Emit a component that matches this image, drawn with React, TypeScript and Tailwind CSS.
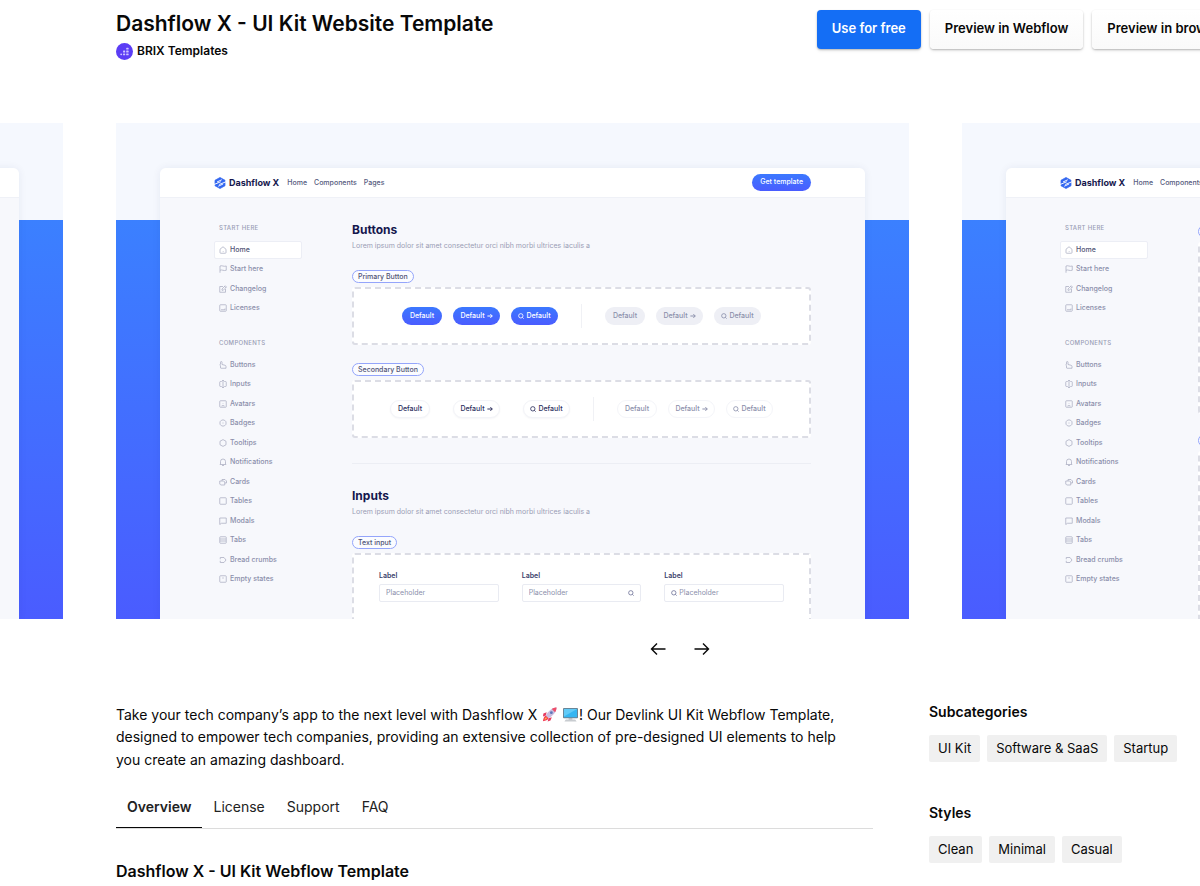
import type { ReactNode } from 'react';

const startLinks = [
  { label: 'Home', icon: 'M2 6.5 8 1.5l6 5V13a1.5 1.5 0 0 1-1.5 1.5h-9A1.5 1.5 0 0 1 2 13ZM7.5 11h1.5' },
  { label: 'Start here', icon: 'M2 15.5V2c4-2 7 2 12.500 0v8.500C9.500 12.500 6 8.500 2 10.500' },
  { label: 'Changelog', icon: 'M8 3H1.500v11.500H13V8M6 10.500V8l6.500-6.500 2.500 2.500L8.500 10.500ZM11 3l2.500 2.500' },
  { label: 'Licenses', icon: 'M3 1.500h10A1.500 1.500 0 0 1 14.500 3v10a1.500 1.500 0 0 1-1.500 1.500H3A1.500 1.500 0 0 1 1.500 13V3A1.500 1.500 0 0 1 3 1.500ZM4 11.500h8V9' },
];

const componentLinks = [
  { label: 'Buttons', icon: 'M3 14.500V9.500L1.500 8 3 6V2.500a1.500 1.500 0 0 1 3 0V7l6 1.500q2 .5 2 2.500v3.500H4' },
  { label: 'Inputs', icon: 'M8 1v14M6 1h4M6 15h4M5.500 3H3A1.500 1.500 0 0 0 1.500 4.500v7A1.500 1.500 0 0 0 3 13h2.500M10.500 3H13a1.500 1.500 0 0 1 1.500 1.500v7A1.500 1.500 0 0 1 13 13h-2.500' },
  { label: 'Avatars', icon: 'M3 1.500h10A1.500 1.500 0 0 1 14.500 3v10a1.500 1.500 0 0 1-1.500 1.500H3A1.500 1.500 0 0 1 1.500 13V3A1.500 1.500 0 0 1 3 1.500ZM5 12q3-2 6 0M8 6v1' },
  { label: 'Badges', icon: 'M5.500 2h5L14 5.500v5L10.500 14h-5L2 10.500v-5ZM7 8h2' },
  { label: 'Tooltips', icon: 'M8 1.200 14 4.500v7L8 14.800 2 11.500v-7Z' },
  { label: 'Notifications', icon: 'M3 12V7a5 5 0 0 1 10 0v5l1 1H2ZM6 15h4' },
  { label: 'Cards', icon: 'M1.500 6h8l2 2v6h-8l-2-2ZM6 6V3h6l3 3v4h-3.500' },
  { label: 'Tables', icon: 'M3 1.500h10A1.500 1.500 0 0 1 14.500 3v10a1.500 1.500 0 0 1-1.500 1.500H3A1.500 1.500 0 0 1 1.500 13V3A1.500 1.500 0 0 1 3 1.500Z' },
  { label: 'Modals', icon: 'M1.500 2h13v10.500H5L1.500 15Z' },
  { label: 'Tabs', icon: 'M3 1.500h10A1.500 1.500 0 0 1 14.500 3v10a1.500 1.500 0 0 1-1.500 1.500H3A1.500 1.500 0 0 1 1.500 13V3A1.500 1.500 0 0 1 3 1.500ZM2 6h12M2 10h12' },
  { label: 'Bread crumbs', icon: 'M2.500 3H10l4 5-4 5H2.500V9.500M2.500 3v3.500' },
  { label: 'Empty states', icon: 'M3 1.500h10A1.500 1.500 0 0 1 14.500 3v10a1.500 1.500 0 0 1-1.500 1.500H3A1.500 1.500 0 0 1 1.500 13V3A1.500 1.500 0 0 1 3 1.500ZM6.500 6h3' },
];

function DashflowLogo() {
  return (
    <svg viewBox="0 0 24 24" className="size-3" aria-hidden="true">
      <path d="M12 1 22 6.500v11L12 23 2 17.500v-11Z" fill="#3468f0" stroke="#3468f0" strokeWidth="1.500" strokeLinejoin="round" />
      <path d="M6 10 15.500 5.500M0 15 13.500 9.500M10.500 15 24 9.500M8.500 18.500 18 14" fill="none" stroke="#fff" strokeWidth="1.900" />
    </svg>
  );
}

function SearchIcon() {
  return (
    <svg viewBox="0 0 16 16" className="size-[6px] shrink-0" fill="none" stroke="currentColor" strokeWidth="2.200" aria-hidden="true">
      <circle cx="7.500" cy="7.500" r="5.800" />
      <path d="m11.500 11.500 3.500 3.500" />
    </svg>
  );
}

function SmallArrow() {
  return (
    <svg viewBox="0 0 16 16" className="size-[6px] shrink-0" fill="none" stroke="currentColor" strokeWidth="2.600" aria-hidden="true">
      <path d="M1 8h13M9 3l5 5-5 5" />
    </svg>
  );
}

type Link = { label: string; icon: string };

function SideNav({ title, links, gap }: { title: string; links: Link[]; gap?: boolean }) {
  return (
    <div className={gap ? 'mt-5' : ''}>
      <h3 className="ml-[5px] text-[6px] leading-[10px] font-medium tracking-wider text-[#9a9db5]">{title}</h3>
      <ul className={gap ? 'mt-[7px] grid h-[234px] auto-rows-fr' : 'mt-[7px] grid h-[78px] auto-rows-fr'}>
        {links.map((link) => {
          const active = link.label === 'Home';
          return (
            <li key={link.label} className="flex items-center">
              <a
                href="#"
                className={
                  active
                    ? 'flex h-[18px] w-full items-center gap-[3px] rounded-[2px] border border-[#eceef5] bg-white px-1 text-[7px] font-medium text-[#4f5375]'
                    : 'flex h-[18px] w-full items-center gap-[3px] px-[5px] text-[7px] font-medium text-[#8b8fab]'
                }
              >
                <svg viewBox="0 0 16 16" className="size-2 shrink-0" fill="none" stroke="#a9acc0" strokeWidth="1.500" aria-hidden="true">
                  <path d={link.icon} />
                </svg>
                {link.label}
              </a>
            </li>
          );
        })}
      </ul>
    </div>
  );
}

function KitSlide({ children }: { children?: ReactNode }) {
  return (
    <article className="h-[496px] w-[793px] shrink-0 overflow-hidden bg-[linear-gradient(to_bottom,#f5f8fe_97px,#3b80ff_97px,#4a5cff)] px-11 pt-[45px]">
      <div className="h-full overflow-hidden rounded-t-md bg-[#f7f8fc] shadow-[0_0_8px_rgba(20,40,100,0.07)]">
        <div className="flex h-[30px] items-center border-b border-[#eff1f7] bg-white px-[54px]">
          {children && (
            <>
              <a href="#" className="flex items-center gap-[3px] text-[9px] font-bold text-[#15174d]">
                <DashflowLogo />
                Dashflow X
              </a>
              <nav className="ml-2 flex gap-[7px] pt-px text-[7px] font-medium text-[#555a7d]">
                <a href="#">Home</a>
                <a href="#">Components</a>
                <a href="#">Pages</a>
              </nav>
              <button className="ml-auto h-[17px] rounded-full bg-linear-to-b from-[#3b78ff] to-[#4a5cff] px-2 text-[7px] font-medium text-white">
                Get template
              </button>
            </>
          )}
        </div>
        {children && (
          <div className="flex gap-[50px] px-[54px] pt-6">
            <div className="w-[88px] shrink-0 pt-px">
              <SideNav title="START HERE" links={startLinks} />
              <SideNav title="COMPONENTS" links={componentLinks} gap />
            </div>
            <div className="min-w-0 flex-1">{children}</div>
          </div>
        )}
      </div>
    </article>
  );
}

function Pill({ children }: { children?: ReactNode }) {
  return (
    <span className="flex h-[13px] w-fit min-w-11 items-center rounded-full border border-[#94a5fb] bg-[#fbfcff] px-[5px] text-[7px] leading-[13px] font-medium text-[#4f5375]">
      {children}
    </span>
  );
}

function SectionTitle({ title }: { title: string }) {
  return (
    <>
      <h2 className="text-[12px] leading-4 font-bold text-[#15174d]">{title}</h2>
      <p className="text-[7px] leading-4 text-[#9a9db5]">
        Lorem ipsum dolor sit amet consectetur orci nibh morbi ultrices iaculis a
      </p>
    </>
  );
}

const dashedBox = 'mt-1 rounded-[3px] border-2 border-dashed border-[#dcdde5] bg-white';

const tones = {
  primary: 'bg-linear-to-b from-[#3b78ff] to-[#4a5cff] text-white',
  disabled: 'bg-[#eeeff5] text-[#8b8fab]',
  outline: 'border border-[#f3f4f8] bg-white text-[#2b2e5c] shadow-[0_1px_2px_rgba(20,30,80,0.04)]',
  faded: 'border border-[#f4f5f9] bg-white text-[#8b8fab]',
};

function KitButton({ tone, lead, trail }: { tone: keyof typeof tones; lead?: boolean; trail?: boolean }) {
  return (
    <button
      className={`flex h-[18px] items-center justify-center gap-[2px] rounded-full text-[7px] font-medium ${lead || trail ? 'w-[47px]' : 'w-10'} ${tones[tone]}`}
    >
      {lead && <SearchIcon />}
      Default
      {trail && <SmallArrow />}
    </button>
  );
}

function ButtonTrio({ tone, wide }: { tone: keyof typeof tones; wide?: boolean }) {
  return (
    <div className={wide ? 'flex gap-[23px]' : 'flex gap-[11px]'}>
      <KitButton tone={tone} />
      <KitButton tone={tone} trail />
      <KitButton tone={tone} lead />
    </div>
  );
}

function Field({ id, lead, trail }: { id: string; lead?: boolean; trail?: boolean }) {
  return (
    <div className="flex-1">
      <label htmlFor={id} className="block text-[7px] leading-[10px] font-semibold text-[#3b3f6b]">
        Label
      </label>
      <div className="mt-[3px] flex h-[18px] items-center gap-[2px] rounded-[2px] border border-[#e9ebf2] bg-white px-[6px] text-[#71759a]">
        {lead && <SearchIcon />}
        <input
          id={id}
          placeholder="Placeholder"
          className="w-full min-w-0 bg-transparent text-[7px] outline-none placeholder:text-[#8b8fab]"
        />
        {trail && <SearchIcon />}
      </div>
    </div>
  );
}

function Rocket() {
  return (
    <svg viewBox="0 0 16 16" className="mx-px inline-block size-[15px] align-[-2px]" role="img" aria-label="rocket">
      <path d="M5 5.500 1.500 7 1 10l3-1ZM10.500 11 9 14.500 6 15.500l1-3.500Z" fill="#e5395f" />
      <path d="M15.500.5C11 .5 7 4 4 9l3 3c5-3 8.500-7 8.500-11.500Z" fill="#c9bde0" />
      <path d="M15.500.5c-2 0-3.500.6-5 1.600l3.400 3.400c1-1.500 1.600-3 1.600-5Z" fill="#ef4d68" />
      <circle cx="10" cy="6" r="1.500" fill="#5d77b8" />
      <path d="m4 9 3 3c-1 2-3 2.500-6 3.200C1.500 12 2 10 4 9Z" fill="#f2394f" />
      <path d="m4.300 10.800 1 1c-.5 1-1.500 1.600-2.800 1.800.2-1.200.8-2.300 1.800-2.800Z" fill="#ffb547" />
    </svg>
  );
}

function Computer() {
  return (
    <svg viewBox="0 0 16 16" className="mx-px inline-block size-[15px] align-[-2px]" role="img" aria-label="computer">
      <rect x="0" y="1" width="16" height="11" rx="1" fill="#6e7f8c" />
      <rect x="1" y="2" width="14" height="9" fill="#35b6f1" />
      <path d="M1 2h14L1 10Z" fill="#62cbf7" />
      <path d="M6 12h4v1.500H6Z" fill="#aab0b6" />
      <path d="M3 13.300h10l1.500 2.200h-13Z" fill="#c8ccd0" />
    </svg>
  );
}

function TagGroup({ title, tags }: { title: string; tags: string[] }) {
  return (
    <section>
      <h3 className="text-[14px] leading-6 font-semibold">{title}</h3>
      <ul className="mt-[11px] flex gap-[7px]">
        {tags.map((tag) => (
          <li key={tag}>
            <a href="#" className="flex h-[27px] items-center rounded-[2px] bg-[#f0f0f0] px-[9px] text-[13px]">
              {tag}
            </a>
          </li>
        ))}
      </ul>
    </section>
  );
}

const headerButton =
  'h-[39px] rounded-sm px-[15px] pb-[2px] text-[13px] font-semibold whitespace-nowrap shadow-[0_1px_2px_rgba(0,0,0,0.25),0_2px_4px_rgba(0,0,0,0.06)]';

export default function App() {
  return (
    <div className="overflow-hidden bg-white font-['Inter',sans-serif] text-[#080808]">
      <div className="min-w-[1360px]">
        <header className="flex items-start justify-between pt-[10px] pr-[118px] pl-[116px]">
          <div>
            <h1 className="text-[21px] leading-7 font-semibold">Dashflow X - UI Kit Website Template</h1>
            <a href="#" className="mt-1 flex h-[18px] items-center gap-1 text-[12px] font-semibold">
              <svg viewBox="0 0 18 18" className="size-[17px]" aria-hidden="true">
                <circle cx="9" cy="9" r="9" fill="#5b3df5" />
                <g fill="#cfc6ff">
                  <rect x="4.500" y="11" width="2" height="2" rx="1" />
                  <rect x="7.500" y="11" width="2.200" height="2" rx=".6" />
                  <rect x="10.800" y="11" width="2.600" height="2" rx=".6" />
                  <rect x="7.500" y="8" width="2.200" height="2" rx=".6" />
                  <rect x="10.800" y="8" width="2.600" height="2" rx=".6" />
                  <rect x="10.800" y="5" width="2.600" height="2" rx=".6" />
                </g>
              </svg>
              BRIX Templates
            </a>
          </div>
          <div className="flex gap-[9px]">
            <button className={`${headerButton} bg-[#146ef5] text-white`}>Use for free</button>
            <button className={`${headerButton} bg-linear-to-b from-white to-[#fafafa]`}>Preview in Webflow</button>
            <button className={`${headerButton} bg-linear-to-b from-white to-[#fafafa]`}>Preview in browser</button>
          </div>
        </header>

        <div className="mt-[63px] -ml-[730px] flex gap-[53px]">
          <KitSlide />
          <KitSlide>
            <SectionTitle title="Buttons" />
            <div className="mt-4">
              <Pill>Primary Button</Pill>
              <div className={`${dashedBox} flex h-[58px] items-center justify-center`}>
                <ButtonTrio tone="primary" />
                <span className="mx-[23px] h-6 w-px bg-[#f0f1f5]" />
                <ButtonTrio tone="disabled" />
              </div>
            </div>
            <div className="mt-[18px]">
              <Pill>Secondary Button</Pill>
              <div className={`${dashedBox} flex h-[58px] items-center justify-center`}>
                <ButtonTrio tone="outline" wide />
                <span className="mx-[23px] h-6 w-px bg-[#f0f1f5]" />
                <ButtonTrio tone="faded" />
              </div>
            </div>
            <hr className="mt-[25px] mb-6 border-[#eceef4]" />
            <SectionTitle title="Inputs" />
            <div className="mt-4">
              <Pill>Text input</Pill>
              <div className={`${dashedBox} flex h-[120px] gap-[23px] px-[25px] pt-4`}>
                <Field id="field-plain" />
                <Field id="field-trailing" trail />
                <Field id="field-leading" lead />
              </div>
            </div>
          </KitSlide>
          <KitSlide>
            <div className="pt-[3px]">
              <Pill />
              <div className={`${dashedBox} h-[172px]`} />
            </div>
            <div className="mt-5">
              <Pill />
              <div className={`${dashedBox} h-[200px]`} />
            </div>
          </KitSlide>
        </div>

        <div className="mt-5 flex justify-center gap-6">
          <button aria-label="Previous slide" className="flex size-5 items-center justify-center">
            <svg viewBox="0 0 16 16" className="size-4" fill="none" stroke="currentColor" strokeWidth="1.400" aria-hidden="true">
              <path d="M15.500 8h-14M7 2.500 1.500 8 7 13.500" />
            </svg>
          </button>
          <button aria-label="Next slide" className="flex size-5 items-center justify-center">
            <svg viewBox="0 0 16 16" className="size-4" fill="none" stroke="currentColor" strokeWidth="1.400" aria-hidden="true">
              <path d="M.5 8h14M9 2.500 14.500 8 9 13.500" />
            </svg>
          </button>
        </div>

        <div className="flex gap-14 px-[116px] pt-[41px]">
          <main className="min-w-0 flex-1 pt-1">
            <p className="pr-5 text-[14px] leading-[1.6]">
              Take your tech company’s app to the next level with Dashflow X <Rocket /> <Computer />! Our Devlink UI Kit
              Webflow Template, designed to empower tech companies, providing an extensive collection of pre-designed UI
              elements to help you create an amazing dashboard.
            </p>
            <div role="tablist" className="mt-3 flex h-[46px] border-b border-[#dcdcdc] text-[14px] text-[#222]">
              <button role="tab" aria-selected="true" className="border-b border-[#080808] px-[11px] pt-[2px] font-semibold">
                Overview
              </button>
              <button role="tab" aria-selected="false" className="border-b border-transparent px-[11px] pt-[2px]">License</button>
              <button role="tab" aria-selected="false" className="border-b border-transparent px-[11px] pt-[2px]">Support</button>
              <button role="tab" aria-selected="false" className="border-b border-transparent px-[11px] pt-[2px]">FAQ</button>
            </div>
            <h2 className="mt-[30px] text-[16px] leading-6 font-semibold">Dashflow X - UI Kit Webflow Template</h2>
          </main>
          <aside className="flex w-[315px] shrink-0 flex-col gap-[39px]">
            <TagGroup title="Subcategories" tags={['UI Kit', 'Software & SaaS', 'Startup']} />
            <TagGroup title="Styles" tags={['Clean', 'Minimal', 'Casual']} />
          </aside>
        </div>
      </div>
    </div>
  );
}
